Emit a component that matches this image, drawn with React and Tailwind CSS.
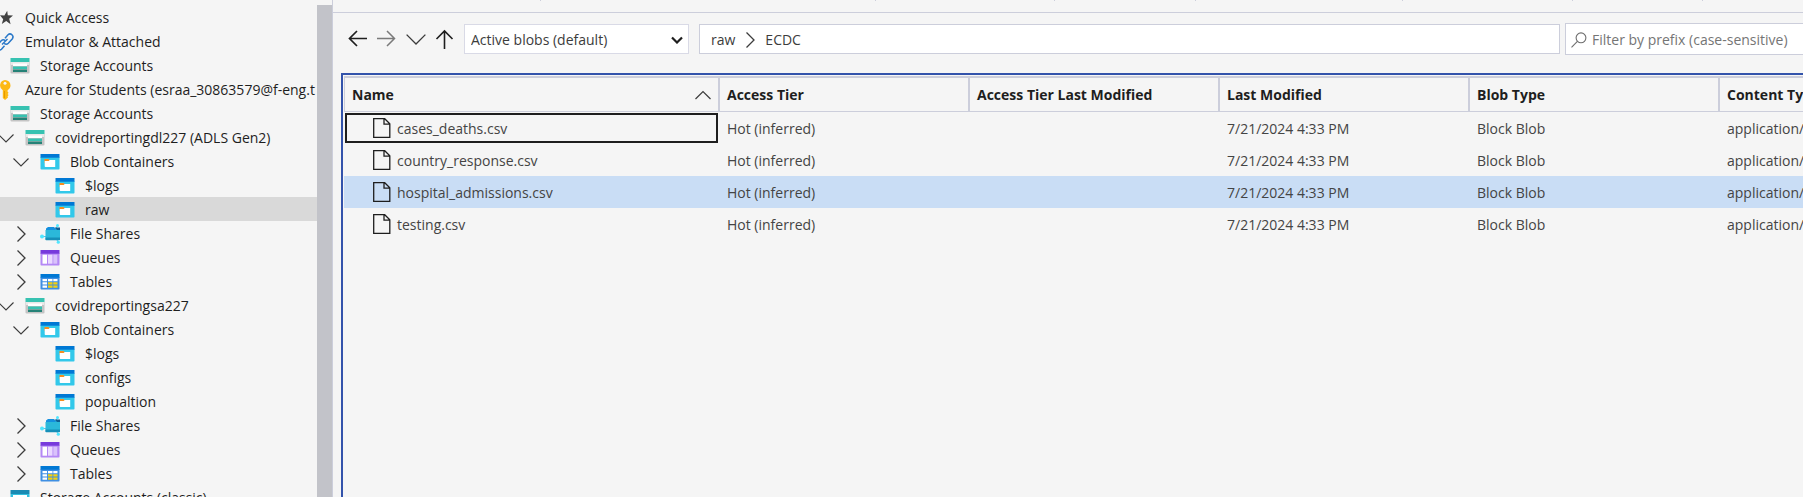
import React from "react";

const StarIcon = () => (
  <svg width="20" height="20" viewBox="0 0 20 20">
    <path fill="#424242" d="M12.2 2.800 12.800 7.300 18 7.600 14.200 10.700 15.600 16.200 11.200 13 6.800 16 8.200 11.300 5 7.200 9.400 7.400z" />
  </svg>
);

const LinkIcon = () => (
  <svg width="20" height="20" viewBox="0 0 20 20" fill="none" stroke="#2a78c8" strokeWidth="1.500">
    <path d="M10 6.200 13 2.700a3 3 0 0 1 4.400 4L13.300 11.300a3 3 0 0 1-4.200 0" />
    <path d="M9.500 13.800 6.500 17.300a3 3 0 0 1-4.400-4L6.200 8.700a3 3 0 0 1 4.200 0" />
    <path d="M7 12.500 12.500 7" />
  </svg>
);

const KeyIcon = () => (
  <svg width="20" height="20" viewBox="0 0 20 20">
    <path fill="#fdb913" d="M10 0a5.500 5.500 0 0 1 5.500 5.500c0 2-1.200 3.700-2.900 4.700v1.500l1 1-1 1.200 1 1.200-1 1.300.4 1L10 20l-2.200-2V10.200A5.500 5.500 0 0 1 10 0z" />
    <circle cx="10" cy="3.300" r="1.500" fill="#f5f5f5" />
    <path stroke="#e59a00" d="M9.500 11v7" />
  </svg>
);

const StorageIcon = () => (
  <svg width="20" height="20" viewBox="0 0 20 20">
    <path fill="#c4c4c4" d="M.5 6h19v10.500a1 1 0 0 1-1 1h-17a1 1 0 0 1-1-1z" />
    <path fill="#e8e8e8" d="M1 6h18v3H1z" />
    <path fill="#37c2b1" d="M.5 2h19v4H.5z" />
    <path fill="#fff" d="M3 7.500h14V10H3z" />
    <path fill="#37c2b1" d="M3 10.500h14V13H3z" />
    <path fill="#258277" d="M3 13.500h14V16H3z" />
  </svg>
);

const ClassicIcon = () => (
  <svg width="20" height="20" viewBox="0 0 20 20">
    <path fill="#32bedd" d="M.5 6h19v9.500a1 1 0 0 1-1 1h-17a1 1 0 0 1-1-1z" />
    <path fill="#198ab3" d="M.5 2h19v4H.5z" />
    <path fill="#fff" d="M3 7h14v2.500H3z" />
    <path fill="#c3f1ff" d="M3 10.500h14V12H3z" />
    <path fill="#198ab3" d="M3 13h14v2.500H3z" />
  </svg>
);

const ContainerIcon = () => (
  <svg width="20" height="20" viewBox="0 0 20 20">
    <path fill="#32c8ea" d="M.5 5h19v11.700a.8.800 0 0 1-.8.800H1.300a.8.800 0 0 1-.8-.8z" />
    <path fill="#0078d4" d="M.5 2h19v3.700H.5z" />
    <path fill="#f78d1e" d="M4.500 7h4l1 1h5.500v3H4.500z" />
    <path fill="#fff" d="M4.700 9h4l1-1h5.500v7h-9.700a.8.800 0 0 1-.8-.8z" />
  </svg>
);

const ShareIcon = () => (
  <svg width="20" height="20" viewBox="0 0 20 20">
    <path stroke="#50c8ee" d="M2 12.500h5M15 6l2.500-4M16 15l2.500 3" fill="none" />
    <path fill="#1490df" d="M6 4.500 8 3h6l1.200 1.500H20v11H6z" />
    <path fill="#2bb8da" d="M5.500 6h9.500l1.500-1h3.500v10.300a.8.800 0 0 1-.8.800h-13a.8.800 0 0 1-.7-.8z" />
    <path fill="#178fb8" d="M5.500 13.500H20v2a.8.800 0 0 1-.8.800h-13a.8.800 0 0 1-.7-.8z" />
    <path fill="#0f5f94" d="M14.500 3.500H20V6h-3z" />
    <circle cx="2" cy="12.500" r="2" fill="#50e6ff" />
    <circle cx="17.500" cy="1.600" r="1.500" fill="#50e6ff" />
    <circle cx="18.300" cy="18.200" r="1.600" fill="#50e6ff" />
  </svg>
);

const QueueIcon = () => (
  <svg width="20" height="20" viewBox="0 0 20 20">
    <path fill="#b488f5" d="M.5 5h19v11.700a.8.800 0 0 1-.8.800H1.300a.8.800 0 0 1-.8-.8z" />
    <path fill="#773adc" d="M.5 2h19v3.700H.5z" />
    <path fill="#fff" d="M2.500 6.700H7v9H2.500z" />
    <path fill="#ead9ff" d="M8 6.700h4.500v9H8z" />
    <path fill="#d9c2fb" d="M13.300 6.700h4v9h-4z" />
  </svg>
);

const TableIcon = () => (
  <svg width="20" height="20" viewBox="0 0 20 20">
    <path fill="#3f8fe3" d="M.5 5h19v11.700a.8.800 0 0 1-.8.800H1.300a.8.800 0 0 1-.8-.8z" />
    <path fill="#0078d4" d="M.5 2h19v3.700H.5z" />
    <path fill="#fff" d="M2.500 7H7v2.300H2.500zM8 7h4.500v2.300H8zM13.300 7h4.200v2.300h-4.200zM2.500 10.200H7v2.300H2.500zM2.500 13.400H7v2.300H2.500z" />
    <path fill="#f5d10f" d="M8 10.200h4.500v2.300H8zM13.300 10.200h4.200v2.300h-4.200zM8 13.400h4.500v2.300H8zM13.300 13.400h4.200v2.300h-4.200z" />
  </svg>
);

const FileIcon = () => (
  <svg width="18" height="20" viewBox="0 0 18 20" fill="none" stroke="#1e1e1e" strokeWidth="1.300" className="shrink-0">
    <path d="M.7.700h11L16.800 5.800v13.500H.7zM11 .7v5.500h5.800" />
  </svg>
);

const ChevronDown = ({ width = 16 }) => (
  <svg width={width} height={width} viewBox="0 0 16 16" fill="none" stroke="#3c3c3c" strokeWidth="1.100">
    <path d="M.5 4.500 8 12 15.500 4.500" />
  </svg>
);

const ChevronRight = () => (
  <svg width="16" height="16" viewBox="0 0 16 16" fill="none" stroke="#3c3c3c" strokeWidth="1.300">
    <path d="M4.500.5 12 8 4.500 15.500" />
  </svg>
);

const indents = ["pl-0", "pl-[15px]", "pl-[30px]", "pl-[45px]", "pl-[60px]"];

const nodes = [
  { level: 0, icon: StarIcon, label: "Quick Access" },
  { level: 0, icon: LinkIcon, label: "Emulator & Attached" },
  { level: 1, icon: StorageIcon, label: "Storage Accounts" },
  { level: 0, icon: KeyIcon, label: "Azure for Students (esraa_30863579@f-eng.t" },
  { level: 1, icon: StorageIcon, label: "Storage Accounts" },
  { level: 2, icon: StorageIcon, label: "covidreportingdl227 (ADLS Gen2)", state: "open" },
  { level: 3, icon: ContainerIcon, label: "Blob Containers", state: "open" },
  { level: 4, icon: ContainerIcon, label: "$logs" },
  { level: 4, icon: ContainerIcon, label: "raw", selected: true },
  { level: 3, icon: ShareIcon, label: "File Shares", state: "closed" },
  { level: 3, icon: QueueIcon, label: "Queues", state: "closed" },
  { level: 3, icon: TableIcon, label: "Tables", state: "closed" },
  { level: 2, icon: StorageIcon, label: "covidreportingsa227", state: "open" },
  { level: 3, icon: ContainerIcon, label: "Blob Containers", state: "open" },
  { level: 4, icon: ContainerIcon, label: "$logs" },
  { level: 4, icon: ContainerIcon, label: "configs" },
  { level: 4, icon: ContainerIcon, label: "popualtion" },
  { level: 3, icon: ShareIcon, label: "File Shares", state: "closed" },
  { level: 3, icon: QueueIcon, label: "Queues", state: "closed" },
  { level: 3, icon: TableIcon, label: "Tables", state: "closed" },
  { level: 1, icon: ClassicIcon, label: "Storage Accounts (classic)" },
];

function TreeRow({ node }) {
  const Icon = node.icon;
  return (
    <li
      role="treeitem"
      aria-level={node.level + 1}
      aria-selected={!!node.selected}
      className={`flex h-6 items-center pt-[2px] ${indents[node.level]} ${node.selected ? "bg-[#d9d9d9]" : ""}`}
    >
      <span className="flex w-[27px] shrink-0">
        {node.state && (
          <button type="button" aria-label={`Toggle ${node.label}`}>
            {node.state === "open" ? <ChevronDown /> : <ChevronRight />}
          </button>
        )}
      </span>
      <span className="mr-[10px] flex shrink-0">
        <Icon />
      </span>
      <span className="whitespace-nowrap">{node.label}</span>
    </li>
  );
}

function Sidebar() {
  return (
    <aside className="flex shrink-0 pt-[5px]">
      <div className="w-[317px] overflow-hidden">
        <ul role="tree" aria-label="Explorer" className="-ml-8">
          {nodes.map((node, i) => (
            <TreeRow key={i} node={node} />
          ))}
        </ul>
      </div>
      <div className="w-[15px] bg-[#c2c3c9]" />
    </aside>
  );
}

function NavButton({ label, children }) {
  return (
    <button type="button" aria-label={label} className="flex size-5 shrink-0 items-center justify-center">
      {children}
    </button>
  );
}

function NavBar() {
  return (
    <div className="flex items-center gap-[5px] pt-[10px] pl-[15px]">
      <div className="flex shrink-0 items-center gap-[9px]">
        <NavButton label="Back">
          <svg width="20" height="20" viewBox="0 0 20 20" fill="none" stroke="#1e1e1e" strokeWidth="1.700">
            <path d="M19 9.500H1.500M9 2 1.500 9.500 9 17" />
          </svg>
        </NavButton>
        <NavButton label="Forward">
          <svg width="20" height="20" viewBox="0 0 20 20" fill="none" stroke="#7a7a7a" strokeWidth="1.500">
            <path d="M0 9.500H17.500M10 2 17.500 9.500 10 17" />
          </svg>
        </NavButton>
        <NavButton label="History">
          <ChevronDown width={20} />
        </NavButton>
        <NavButton label="Up">
          <svg width="20" height="20" viewBox="0 0 20 20" fill="none" stroke="#1e1e1e" strokeWidth="1.600">
            <path d="M9.500 20V2M1.500 10 9.500 2l8 8" />
          </svg>
        </NavButton>
      </div>
      <div className="relative ml-1 h-[30px] w-[225px] shrink-0">
        <select
          aria-label="Blob view"
          defaultValue="active"
          className="h-full w-full appearance-none border border-[#d9dae6] bg-white pt-[2px] pl-[6px] text-[#3c3c3c]"
        >
          <option value="active">Active blobs (default)</option>
        </select>
        <svg width="12" height="8" viewBox="0 0 12 8" fill="none" stroke="#1e1e1e" strokeWidth="2.200" className="pointer-events-none absolute top-3 right-[6px]">
          <path d="M1 1.500 6 6.500 11 1.500" />
        </svg>
      </div>
      <nav aria-label="Path" className="ml-[5px] flex h-[30px] min-w-0 flex-1 items-center border border-[#cccedb] bg-white pt-[2px] pl-[11px] text-[#3c3c3c]">
        <a href="#raw">raw</a>
        <span className="mx-[7px]">
          <ChevronRight />
        </span>
        <a href="#ecdc">ECDC</a>
      </nav>
      <label className="flex h-8 w-[238px] shrink-0 items-center gap-[5px] border border-r-0 border-[#cccedb] bg-white pt-[2px] pl-[5px]">
        <svg width="16" height="16" viewBox="0 0 16 16" fill="none" stroke="#6e6e6e" strokeWidth="1.100" className="shrink-0">
          <circle cx="10" cy="5.800" r="4.900" />
          <path d="M6.400 9.400.5 15.300" />
        </svg>
        <input
          type="text"
          aria-label="Filter by prefix"
          placeholder="Filter by prefix (case-sensitive)"
          className="w-full min-w-0 bg-transparent outline-none placeholder:text-[#757575]"
        />
      </label>
    </div>
  );
}

const headers = ["Access Tier", "Access Tier Last Modified", "Last Modified", "Blob Type", "Content Type"];
const files = ["cases_deaths.csv", "country_response.csv", "hospital_admissions.csv", "testing.csv"];

function FileTable() {
  return (
    <div className="mt-[18px] ml-2 flex-1 overflow-hidden border-t-2 border-l-2 border-[#3353ab] pt-px pl-px">
      <table className="w-[1626px] table-fixed border-separate border-spacing-0 text-left">
        <colgroup>
          <col className="w-[376px]" />
          {headers.map((h) => (
            <col key={h} className="w-[250px]" />
          ))}
        </colgroup>
        <thead>
          <tr className="h-9 text-[#1e1e1e]">
            <th className="border-t-2 border-r-2 border-b border-l border-[#cccedb] pr-[7px] pl-[7px] font-bold" aria-sort="ascending">
              <span className="flex items-center justify-between">
                Name
                <svg width="16" height="16" viewBox="0 0 16 16" fill="none" stroke="#3c3c3c" strokeWidth="1.200">
                  <path d="M.5 12 8 4.500 15.500 12" />
                </svg>
              </span>
            </th>
            {headers.map((h) => (
              <th key={h} className="border-t-2 border-r-2 border-b border-[#cccedb] px-[7px] font-bold">
                {h}
              </th>
            ))}
          </tr>
        </thead>
        <tbody className="text-[#444]">
          {files.map((file, i) => (
            <tr key={file} className={`h-8 ${i === 2 ? "bg-[#c9ddf5]" : ""}`}>
              <td className="p-0">
                <div className={`mr-[2px] ml-px flex h-[30px] items-center gap-[6px] border-2 pl-[26px] ${i === 0 ? "border-[#1e1e1e]" : "border-transparent"}`}>
                  <FileIcon />
                  <span className="pt-[2px]">{file}</span>
                </div>
              </td>
              <td className="px-[7px] pt-[2px]">Hot (inferred)</td>
              <td />
              <td className="px-[7px] pt-[2px]">7/21/2024 4:33 PM</td>
              <td className="px-[7px] pt-[2px]">Block Blob</td>
              <td className="px-[7px] pt-[2px]">application/vnd.ms-excel</td>
            </tr>
          ))}
        </tbody>
      </table>
    </div>
  );
}

const Divider = ({ className }) => <span className={`h-px shrink-0 border-r border-[#cccedb] ${className}`} />;

export default function App() {
  return (
    <div className="flex h-screen overflow-hidden bg-[#f5f5f5] font-['Open_Sans',sans-serif] text-[14px] leading-5 text-[#1e1e1e]">
      <Sidebar />
      <main className="flex min-w-0 flex-1 flex-col border-l border-[#cccedb]">
        <div className="flex h-[13px] shrink-0 border-b border-[#cccedb]">
          <Divider className="w-[208px]" />
          <Divider className="w-[335px]" />
          <Divider className="w-[179px]" />
          <Divider className="w-[141px]" />
          <Divider className="w-[207px]" />
          <Divider className="w-[170px]" />
          <Divider className="w-[130px]" />
        </div>
        <NavBar />
        <FileTable />
      </main>
    </div>
  );
}
